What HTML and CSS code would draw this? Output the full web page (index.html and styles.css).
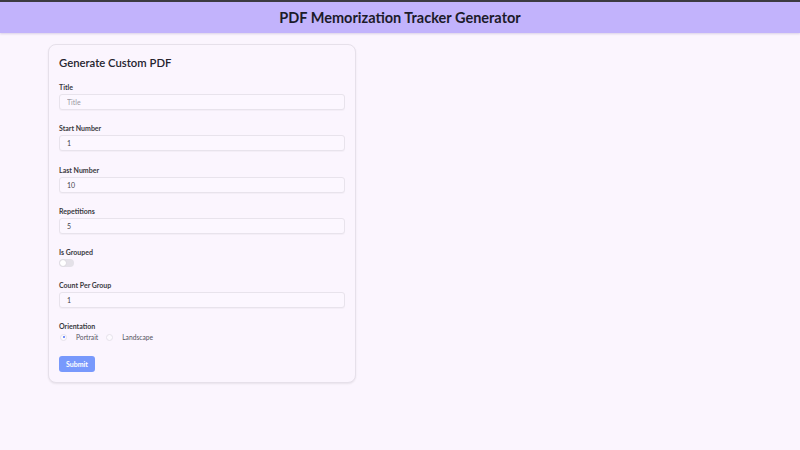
FILE: index.html
```html
<!DOCTYPE html>
<html>
<head>
<meta charset="utf-8">
<link rel="stylesheet" href="styles.css">
</head>
<body>
<div class="topline"></div>
<header class="header"><h1 class="header-title">PDF Memorization Tracker Generator</h1></header>
<main class="main">
  <form class="card">
    <h2 class="card-title">Generate Custom PDF</h2>
    <div class="field">
      <label class="label">Title</label>
      <input class="input" type="text" placeholder="Title">
    </div>
    <div class="field">
      <label class="label">Start Number</label>
      <input class="input" type="text" value="1">
    </div>
    <div class="field">
      <label class="label">Last Number</label>
      <input class="input" type="text" value="10">
    </div>
    <div class="field">
      <label class="label">Repetitions</label>
      <input class="input" type="text" value="5">
    </div>
    <div class="field field-toggle">
      <label class="label">Is Grouped</label>
      <span class="toggle"><span class="knob"></span></span>
    </div>
    <div class="field">
      <label class="label">Count Per Group</label>
      <input class="input" type="text" value="1">
    </div>
    <div class="field field-radio">
      <label class="label">Orientation</label>
      <div class="radios">
        <span class="radio checked"></span><span class="radio-text">Portrait</span>
        <span class="radio"></span><span class="radio-text">Landscape</span>
      </div>
    </div>
    <button class="submit" type="button">Submit</button>
  </form>
</main>
</body>
</html>
```
FILE: styles.css
```css
* { box-sizing: border-box; }
html, body { margin: 0; padding: 0; }
body {
  background: #fbf5fe;
  font-family: Lato, "Open Sans", sans-serif;
  color: #2a2a35;
  width: 800px;
  height: 450px;
  overflow: hidden;
}
.topline { height: 2px; background: #3b3a40; }
.header {
  height: 31px;
  background: #c2b3fc;
  display: flex;
  align-items: center;
  justify-content: center;
  box-shadow: 0 1px 2px rgba(120, 100, 160, 0.25);
}
.header-title {
  margin: 0;
  font-size: 14.5px;
  font-weight: 700;
  color: #1c1b2a;
}
.main { padding: 11px 0 0 48px; }
.card {
  width: 308px;
  background: #fbf5fe;
  border: 1px solid #e6e0ea;
  border-radius: 8px;
  box-shadow: 0 1px 2px rgba(0,0,0,0.08);
  padding: 11px 10px 10px 10px;
  display: flex;
  flex-direction: column;
  align-items: flex-start;
}
.card-title {
  margin: 0 0 12px 0;
  font-size: 11.3px;
  line-height: 14px;
  font-weight: 600;
  color: #25242e;
}
.field {
  display: flex;
  flex-direction: column;
  width: 286px;
  margin-bottom: 13.3px;
}
.label {
  font-size: 7px;
  line-height: 10px;
  font-weight: 700;
  color: #3a3940;
  margin-bottom: 2px;
}
.input {
  height: 16px;
  width: 286px;
  border: 1px solid #e8e3ec;
  border-radius: 3px;
  background: #fcf7ff;
  font-family: inherit;
  font-size: 7px;
  color: #44434c;
  padding: 0 7px;
  outline: none;
  box-shadow: 0 1px 1px rgba(0,0,0,0.03);
}
.input::placeholder { color: #9a98a3; }
.field-toggle { margin-bottom: 13px; }
.toggle {
  display: block;
  width: 15px;
  height: 8px;
  background: #e4e1e8;
  border-radius: 4px;
  position: relative;
}
.knob {
  position: absolute;
  left: 1px;
  top: 1px;
  width: 6px;
  height: 6px;
  background: #ffffff;
  border-radius: 50%;
  box-shadow: 0 0 1px rgba(0,0,0,0.2);
}
.field-radio { margin-bottom: 15px; }
.radios {
  display: flex;
  align-items: center;
  height: 8px;
}
.radio {
  width: 7px;
  height: 7px;
  border-radius: 50%;
  border: 1px solid #e6e2ea;
  background: #fdfaff;
  position: relative;
  margin-left: 1px;
  margin-right: 9px;
}
.radio.checked::after {
  content: "";
  position: absolute;
  left: 1.5px;
  top: 1.5px;
  width: 2px;
  height: 2px;
  border-radius: 50%;
  background: #4b6ef5;
}
.radio-text {
  font-size: 6.7px;
  color: #55545e;
  margin-right: 7px;
}
.submit {
  height: 16px;
  width: 36px;
  border: none;
  border-radius: 3px;
  background: #7899fc;
  color: #ffffff;
  font-family: inherit;
  font-weight: 700;
  font-size: 7px;
  padding: 0;
}
```
